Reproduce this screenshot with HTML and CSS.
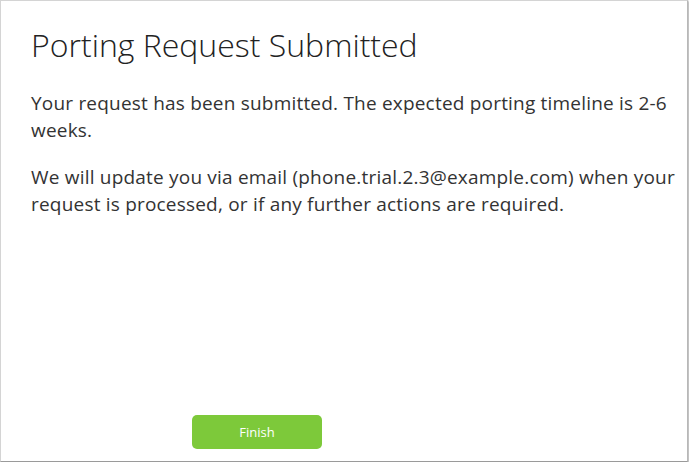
FILE: index.html
```html
<!DOCTYPE html>
<html>
<head>
  <title>Porting Request Submitted</title>
  <link rel="stylesheet" href="styles.css">
</head>
<body>
  <div id="dialog">
    <div class="dialog-body">
      <h1 class="dialog-title">Porting Request Submitted</h1>
      <p>Your request has been submitted. The expected porting timeline is 2-6 weeks.</p>
      <p>We will update you via email (phone.trial.2.3@example.com) when your request is processed, or if any further actions are required.</p>
    </div>
    <div class="dialog-footer">
      <a href="#" id="finish-button">Finish</a>
    </div>
  </div>
</body>
</html>
```

FILE: styles.css
```css
body {
  margin: 0;
  padding: 0;
  background-color: #fff;
  font-family: "Open Sans", Arial, sans-serif;
}

#dialog {
  box-sizing: border-box;
  width: 688px;
  height: 462px;
  background-color: #fff;
  border: 1px solid #d4d4d4;
  border-right-color: #b8b8b8;
  border-bottom-color: #9a9a9a;
  box-shadow: 1px 1px 2px rgba(0, 0, 0, 0.35);
  display: flex;
  flex-direction: column;
  justify-content: space-between;
}

.dialog-body {
  padding: 0 4px 0 30px;
}

.dialog-title {
  font-weight: 300;
  font-size: 32px;
  line-height: 40px;
  color: #222;
  margin: 24px 0 25px 0;
}

.dialog-body p {
  font-size: 19px;
  line-height: 27px;
  letter-spacing: 0.2px;
  color: #333;
  margin: 0 0 20px 0;
}

.dialog-footer {
  padding: 0 0 12px 191px;
}

#finish-button {
  display: block;
  width: 130px;
  height: 34px;
  line-height: 34px;
  background-color: #7dc93a;
  color: #fff;
  font-size: 13px;
  text-align: center;
  text-decoration: none;
  border-radius: 5px;
}
```
